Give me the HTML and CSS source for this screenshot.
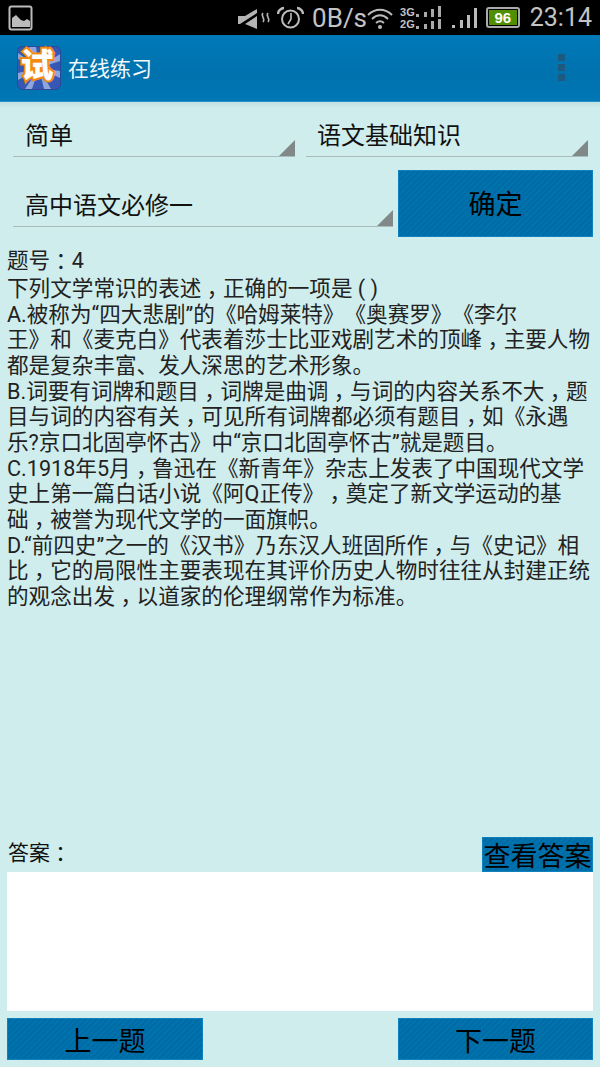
FILE: index.html
```html
<!DOCTYPE html>
<html lang="zh">
<head>
  <meta charset="UTF-8">
  <meta name="viewport" content="width=device-width, initial-scale=1.0">
  <title>在线练习</title>
  <link rel="stylesheet" href="styles.css">
</head>
<body>
  <div class="status-bar">
    <svg class="st-pic" width="26" height="26" viewBox="0 0 26 26"><rect x="1.500" y="1.500" width="22" height="23" rx="2" fill="none" stroke="#bbb" stroke-width="2"/><path d="M4 20V13l4-3 5 5 3 1 3-2 3 2v6H4z" fill="#bbb"/></svg>
    <div class="st-right">
      <svg width="33" height="24" viewBox="0 0 33 24"><path d="M0 10h7L19 3v4L2 18H0zM7 18l12-8v13z" fill="#b4b4b4"/><path d="M25 7c-3 3 3 5 0 9M30 7c-3 3 3 5 0 9" fill="none" stroke="#b4b4b4" stroke-width="1.600"/></svg>
      <svg class="st-alarm" width="27" height="26" viewBox="0 0 27 26"><circle cx="13.500" cy="14" r="8.500" fill="none" stroke="#bbb" stroke-width="2"/><path d="M14 8v6l-3 5" fill="none" stroke="#bbb" stroke-width="1.600"/><path d="M1 9c0-3 3-6 6-6M26 9c0-3-3-6-6-6" fill="none" stroke="#bbb" stroke-width="2.400"/></svg>
      <span class="st-speed">0B/s</span>
      <svg class="st-wifi" width="26" height="24" viewBox="0 0 26 24"><path d="M1 9c7-7 17-7 24 0M5 13c5-5 11-5 16 0M9 17c3-2.500 5-2.500 8 0" fill="none" stroke="#bbb" stroke-width="2"/><circle cx="13" cy="21" r="2" fill="#bbb"/></svg>
      <div class="st-net"><span>3G</span><span>2G</span></div>
      <svg class="st-bars" width="25" height="24" viewBox="0 0 25 24"><path d="M0 8h3v3H0zM8 6h3v5H8zM15 3h3v8h-3zM22 0h3v11h-3zM0 20h3v3H0zM8 18h3v5H8zM15 15h3v8h-3zM22 13h3v10h-3z" fill="#aaa"/></svg>
      <svg class="st-signal" width="25" height="22" viewBox="0 0 25 22"><path d="M0 18h3v3H0zM8 13h3v8H8zM15 8h3v13h-3zM22 1h3v20h-3z" fill="#bbb"/></svg>
      <div class="st-batt"><span>96</span></div>
      <span class="st-time">23:14</span>
    </div>
  </div>

  <header class="action-bar">
    <svg class="logo" width="44" height="44" viewBox="0 0 44 44">
      <rect x="0.500" y="0.500" width="43" height="43" rx="5" fill="#3558b4" stroke="#2a4896"/>
      <path d="M22 22L12 1h7zM22 22L26 1h7zM22 22L43 8v7zM22 22L43 25v7zM22 22L34 43h-7zM22 22L15 43H8zM22 22L1 34v-7zM22 22L1 13V7z" fill="#8fa6dc"/>
    </svg>
    <span class="logo-char">试</span>
    <span class="title">在线练习</span>
    <div class="overflow"><i></i><i></i><i></i></div>
  </header>

  <main class="content">
    <div class="row row-top">
      <div class="spinner spinner-a">简单</div>
      <div class="spinner spinner-b">语文基础知识</div>
    </div>
    <div class="row row-second">
      <div class="spinner spinner-c">高中语文必修一</div>
      <button class="btn btn-ok">确定</button>
    </div>

    <div class="question">
      <p>题号<span class="pc">：</span>4</p>
      <p>下列文学常识的表述<span class="pc">，</span>正确的一项是 ( )<br>A.被称为“四大悲剧”的《哈姆莱特》《奥赛罗》《李尔<br>王》和《麦克白》代表着莎士比亚戏剧艺术的顶峰<span class="pc">，</span>主要人物都是复杂丰富、发人深思的艺术形象。<br>B.词要有词牌和题目<span class="pc">，</span>词牌是曲调<span class="pc">，</span>与词的内容关系不大<span class="pc">，</span>题目与词的内容有关<span class="pc">，</span>可见所有词牌都必须有题目<span class="pc">，</span>如《永遇乐?京口北固亭怀古》中“京口北固亭怀古”就是题目。<br>C.1918年5月<span class="pc">，</span>鲁迅在《新青年》杂志上发表了中国现代文学史上第一篇白话小说《阿Q正传》<span class="pc">，</span>奠定了新文学运动的基础<span class="pc">，</span>被誉为现代文学的一面旗帜。<br>D.“前四史”之一的《汉书》乃东汉人班固所作<span class="pc">，</span>与《史记》相比<span class="pc">，</span>它的局限性主要表现在其评价历史人物时往往从封建正统的观念出发<span class="pc">，</span>以道家的伦理纲常作为标准。</p>
    </div>

    <div class="answer-head">
      <span class="answer-label">答案<span class="pc">：</span></span>
      <button class="btn btn-show">查看答案</button>
    </div>
    <div class="answer-box"></div>
    <div class="nav-row">
      <button class="btn btn-nav">上一题</button>
      <button class="btn btn-nav">下一题</button>
    </div>
  </main>
</body>
</html>
```

FILE: styles.css
```css
* {
  box-sizing: border-box;
}
html, body {
  margin: 0;
  padding: 0;
}
body {
  width: 600px;
  height: 1067px;
  overflow: hidden;
  background: #cfeded;
  font-family: Roboto, "Noto Sans CJK SC", sans-serif;
  text-spacing-trim: space-all;
  color: #111;
  display: flex;
  flex-direction: column;
}

/* status bar */
.status-bar {
  height: 35px;
  background: #000;
  display: flex;
  align-items: center;
  justify-content: space-between;
  padding: 0 8px 0 8px;
  flex: none;
}
.st-right {
  display: flex;
  align-items: center;
  color: #c4c4c4;
}
.st-alarm {
  margin-left: 6px;
}
.st-speed {
  font-size: 26px;
  margin-left: 8px;
}
.st-net {
  display: flex;
  flex-direction: column;
  font: bold 11px/12px "Liberation Sans", sans-serif;
  margin-left: 7px;
}
.st-bars {
  margin-left: 1px;
}
.st-signal {
  margin-left: 11px;
}
.st-batt {
  width: 34px;
  height: 21px;
  margin-left: 9px;
  border: 2px solid #aaa;
  border-radius: 3px;
  padding: 1px;
  display: flex;
}
.st-batt span {
  flex: 1;
  background: #4f8f00;
  color: #fff;
  font: bold 15px/15px "Liberation Sans", sans-serif;
  text-align: center;
}
.st-time {
  font-size: 25px;
  margin-left: 10px;
}

/* action bar */
.action-bar {
  position: relative;
  height: 67px;
  flex: none;
  display: flex;
  align-items: center;
  padding: 0 0 0 17px;
  background: linear-gradient(#0079b8, #0072ae 60%, #0077b6);
  border-bottom: 1px solid #2a8fc4;
}
.logo-char {
  position: absolute;
  left: 15px;
  top: 9px;
  width: 44px;
  text-align: center;
  font-size: 33px;
  line-height: 44px;
  font-weight: 900;
  color: #fff;
  -webkit-text-stroke: 4px #f58a12;
  paint-order: stroke fill;
}
.title {
  margin-left: 7px;
  margin-bottom: 3px;
  font-size: 21px;
  color: #f2f7fa;
}
.overflow {
  position: absolute;
  right: 35px;
  top: 19px;
  display: flex;
  flex-direction: column;
  gap: 3px;
}
.overflow i {
  width: 7px;
  height: 7px;
  background: #1d5a80;
}

/* content */
.content {
  flex: 1;
  display: flex;
  flex-direction: column;
  padding: 0 7px;
  background: linear-gradient(#bfe0e2, #cfeded 6px);
}
.row {
  display: flex;
}
.row-top {
  height: 55px;
  padding: 0 5px 0 6px;
  justify-content: space-between;
}
.row-second {
  height: 67px;
  margin-top: 13px;
  justify-content: space-between;
}
.spinner {
  position: relative;
  border-bottom: 1px solid #a9bcbc;
  font-size: 24px;
  line-height: 32px;
  padding-left: 12px;
}
.spinner::after {
  content: "";
  position: absolute;
  right: 0;
  bottom: 0;
  border-style: solid;
  border-width: 0 0 16px 16px;
  border-color: transparent transparent #808888 transparent;
}
.spinner-a {
  width: 282px;
  padding-top: 18px;
}
.spinner-b {
  width: 282px;
  padding-left: 11px;
  padding-top: 18px;
}
.spinner-c {
  width: 380px;
  height: 57px;
  margin-left: 6px;
  padding-top: 20px;
}
.btn {
  display: block;
  padding: 0;
  border: 1px solid #0f82bd;
  background: repeating-linear-gradient(135deg, #0073ae 0 2px, #006ca6 2px 4px);
  color: #000;
  font-family: inherit;
  text-align: center;
}
.btn-ok {
  width: 195px;
  height: 67px;
  padding-bottom: 2px;
  font-size: 27px;
}
.question {
  margin-top: 11px;
  font-size: 21.6px;
  line-height: 25.67px;
  color: #222;
  height: 589px;
}
.question p {
  margin: 0 0 2.3px;
}
/* half-width comma and colon, padded back out so they sit centred in a full cell */
.pc {
  font-feature-settings: "halt";
  padding: 0 0.25em;
}
.answer-head {
  display: flex;
  justify-content: space-between;
  height: 35px;
}
.answer-label {
  font-size: 21px;
  line-height: 32px;
  padding-left: 1px;
  white-space: nowrap;
}
.btn-show {
  width: 111px;
  height: 35px;
  padding-top: 4px;
  font-size: 27px;
  line-height: 31px;
  white-space: nowrap;
}
.answer-box {
  height: 139px;
  background: #fff;
}
.nav-row {
  margin-top: 7px;
  display: flex;
  justify-content: space-between;
}
.btn-nav {
  width: 196px;
  height: 42px;
  font-size: 27px;
}
.btn-nav + .btn-nav {
  width: 195px;
}
```
